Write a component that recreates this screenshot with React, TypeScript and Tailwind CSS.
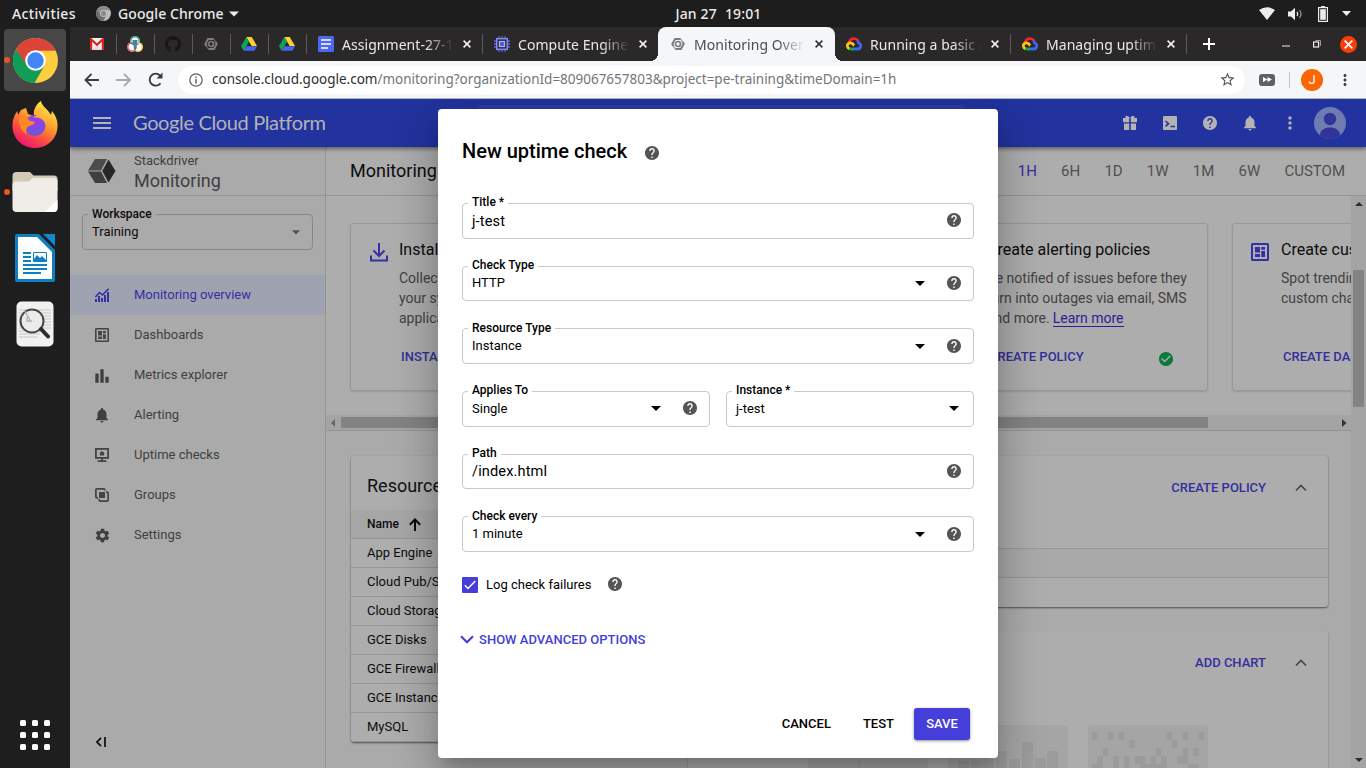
import type { ReactNode } from "react";
import {
  MdArrowDropDown,
  MdBarChart,
  MdCheckCircle,
  MdHelp,
  MdMenu,
  MdMoreVert,
  MdNotifications,
  MdSettings,
  MdStarBorder,
} from "react-icons/md";

/* ---------- logos and drawings ---------- */

function ChromeLogo({ size, gray = false }: { size: number; gray?: boolean }) {
  const c = gray
    ? ["#8a8a8a", "#6e6e6e", "#bdbdbd", "#8c8c8c"]
    : ["#db4437", "#0f9d58", "#ffcd40", "#4285f4"];
  return (
    <svg width={size} height={size} viewBox="0 0 48 48">
      <circle cx="24" cy="24" r="24" fill={c[2]} />
      <path d="M3.2 12A24 24 0 0 1 44.8 12L45.3 13.5H24L13.5 30Z" fill={c[0]} />
      <path d="M3.2 12A24 24 0 0 0 23 48L33.5 29.5L24 34.5L14.5 29Z" fill={c[1]} />
      <circle cx="24" cy="24" r="11" fill={gray ? "#c8c8c8" : "#fff"} />
      <circle cx="24" cy="24" r="8.8" fill={c[3]} />
    </svg>
  );
}

function Firefox() {
  return (
    <svg width="46" height="47" viewBox="0 0 46 47" className="mb-[3px]">
      <defs>
        <linearGradient id="ffBody" x1="0.8" y1="0" x2="0.25" y2="1">
          <stop offset="0" stopColor="#fff44f" />
          <stop offset="0.4" stopColor="#ffa02e" />
          <stop offset="0.7" stopColor="#ff4a42" />
          <stop offset="1" stopColor="#e8107c" />
        </linearGradient>
        <radialGradient id="ffGlobe" cx="0.55" cy="0.3" r="0.8">
          <stop offset="0" stopColor="#a238e8" />
          <stop offset="1" stopColor="#5b5fd8" />
        </radialGradient>
      </defs>
      <path
        d="M29 0C30 5 34 7 37 11L39 14L40 10C44 15 46 20 45.500 26C45 38 35 47 23 47C10 47 0 37 .5 24C.6 18 3 13 5.500 10L6 14L9 9L14 7L16 13L22 15C21 9 24 3 29 0Z"
        fill="url(#ffBody)"
      />
      <circle cx="23" cy="24.500" r="10.500" fill="url(#ffGlobe)" />
      <path d="M7 17C11 14 15 15 17 19.500L23 21C22 24 18 24.500 15.500 26C13.500 29 14 31 16 33C11 32 7 27 7 17Z" fill="#ff8a24" />
      <path d="M25 14C30 14 34 18 34 23C31 17.500 27 16 21 16.500Z" fill="#ffb52b" />
    </svg>
  );
}

function Folder() {
  return (
    <svg width="46" height="42" viewBox="0 0 46 42">
      <path d="M.5 5Q.5 1 4.500 1H18L21.500 4.500H42Q45.500 4.500 45.500 8V20H.5Z" fill="#d2cab8" />
      <path d="M.5 14Q.5 10.500 4 10.500H17L21 7H42Q45.500 7 45.500 10.500V37Q45.500 41 41.500 41H4.500Q.5 41 .5 37Z" fill="#f0ede8" />
      <path d="M45.500 29L33 41H41.500Q45.500 41 45.500 37Z" fill="#fff" />
    </svg>
  );
}

function Writer() {
  return (
    <svg width="40" height="48" viewBox="0 0 40 48">
      <path d="M0 2Q0 0 2 0H24L40 16V46Q40 48 38 48H2Q0 48 0 46Z" fill="#0e7fc2" />
      <path d="M28 0H40V12Z" fill="#1687cd" />
      <path d="M3 3H22L37 18V45H3Z" fill="#fff" />
      <path
        d="M8 19H16M8 23H16M8 27H16M8 31H32M8 35H32M8 39H26"
        stroke="#0e7fc2"
        strokeWidth="2"
      />
      <path d="M18.500 18.500H31.500V27.500H18.500Z" fill="none" stroke="#0e7fc2" />
      <path d="M19 27V25L22 21L25 24L27 22L31 26V27Z" fill="#0e7fc2" />
    </svg>
  );
}

function DocViewer() {
  return (
    <svg width="38" height="46" viewBox="0 0 38 46">
      <rect x=".5" y=".5" width="37" height="45" rx="5" fill="#f1f1f1" />
      <path
        d="M3 9H35M3 12H35M3 15H35M3 18H35M3 21H35M3 24H35M3 27H35M3 30H26M3 33H24M3 36H22"
        stroke="#c9c6ba"
      />
      <circle cx="16" cy="20" r="11.500" fill="#ececec" fillOpacity=".93" stroke="#484848" strokeWidth="2" />
      <path d="M9 10L15 21M11 16V20H16" stroke="#b5b5b5" strokeWidth="1.500" fill="none" />
      <path d="M25 28L32 35.500" stroke="#2d2d2d" strokeWidth="4" strokeLinecap="round" />
    </svg>
  );
}

function Gmail() {
  return (
    <svg width="16" height="12" viewBox="0 0 16 12">
      <rect x="1" width="14" height="12" fill="#f1f1f1" />
      <path d="M3 12L8 6.500L13 12Z" fill="#dcdcdc" />
      <path d="M2.100 12V1.300L8 6.800L13.900 1.300V12" fill="none" stroke="#d9251d" strokeWidth="2.200" />
    </svg>
  );
}

function RingsFavicon() {
  return (
    <svg width="16" height="16" viewBox="0 0 16 16">
      <circle cx="8" cy="5" r="4.800" fill="#fff" />
      <circle cx="5" cy="11" r="4.800" fill="#fff" />
      <circle cx="11" cy="11" r="4.800" fill="#fff" />
      <circle cx="8" cy="5" r="4.200" fill="none" stroke="#34a97b" strokeWidth="1.300" />
      <circle cx="5" cy="11" r="4.200" fill="none" stroke="#df4a57" strokeWidth="1.300" />
      <circle cx="11" cy="11" r="4.200" fill="none" stroke="#efc94c" strokeWidth="1.300" />
      <path d="M5.500 4H10.500L10 9H6ZM7 8H9V14H7Z" fill="#3f82b8" />
    </svg>
  );
}

function Octocat() {
  return (
    <svg width="16" height="16" viewBox="0 0 16 16" fill="#161616">
      <path d="M8 0C3.580 0 0 3.580 0 8c0 3.540 2.290 6.530 5.470 7.590.4.070.55-.17.55-.38 0-.19-.01-.82-.01-1.490-2.010.37-2.530-.49-2.690-.94-.09-.23-.48-.94-.82-1.130-.28-.15-.68-.52-.01-.53.63-.01 1.080.58 1.230.82.72 1.210 1.870.87 2.330.66.07-.52.28-.87.51-1.070-1.780-.2-3.640-.89-3.640-3.950 0-.87.31-1.590.82-2.150-.08-.2-.36-1.020.08-2.120 0 0 .67-.21 2.200.82.64-.18 1.320-.27 2-.27s1.360.09 2 .27c1.530-1.040 2.200-.82 2.200-.82.44 1.100.16 1.920.08 2.120.51.56.82 1.270.82 2.150 0 3.070-1.870 3.750-3.650 3.950.29.25.54.73.54 1.480 0 1.070-.01 1.930-.01 2.200 0 .21.15.46.55.38A8.010 8.010 0 0 0 16 8c0-4.420-3.580-8-8-8z" />
    </svg>
  );
}

function StackHex() {
  return (
    <svg width="14" height="14" viewBox="0 0 14 14" fill="none" stroke="#7c7c7c">
      <path d="M9.700 2H4.100L1.300 7L2.600 9.300M4.300 12H9.900L12.700 7L11.400 4.700" strokeWidth="2" />
      <path d="M9.700 2L11.400 4.700M2.600 9.300L4.300 12" strokeWidth="1.300" strokeOpacity=".7" />
      <circle cx="7" cy="7" r="2.500" strokeWidth="1.700" />
    </svg>
  );
}

function Drive() {
  return (
    <svg width="16" height="14" viewBox="0 0 16 14">
      <path d="M5.300 0H10.700L16 9H10.700Z" fill="#ffd32c" />
      <path d="M5.300 0L8 4.600L2.700 13.800L0 9.200Z" fill="#0fa259" />
      <path d="M5.400 9.200H16L13.300 13.800H2.700Z" fill="#4466f0" />
    </svg>
  );
}

function Docs() {
  return (
    <svg width="16" height="16" viewBox="0 0 16 16">
      <rect width="16" height="16" rx="1.500" fill="#4c67f2" />
      <path d="M3 4H13M3 8H13M3 12H10" stroke="#fff" strokeWidth="1.700" />
    </svg>
  );
}

function Cpu() {
  return (
    <svg width="16" height="16" viewBox="0 0 16 16" fill="none">
      <path d="M5 0V16M8 0V16M11 0V16M0 5H16M0 8H16M0 11H16" stroke="#5c63ea" strokeWidth="1.300" />
      <rect x="2.700" y="2.700" width="10.600" height="10.600" fill="#2b2829" stroke="#7f8af5" strokeWidth="1.500" />
      <rect x="5.500" y="5.500" width="5" height="5" fill="#4a50dc" stroke="#a6aefa" strokeWidth="1.300" />
    </svg>
  );
}

function GcpLogo() {
  return (
    <svg width="16" height="14" viewBox="0 0 16 14" fill="none" strokeWidth="2.800">
      <path d="M3 5.400C3.800 2.800 5.800 1.600 8 1.600C9.700 1.600 10.900 2.200 12 3.600" stroke="#ea2a2e" />
      <path d="M11.500 3.500C12.300 4.500 12.600 5 12.600 6C14.200 6.400 14.800 7.500 14.600 9C14.400 10.800 13 12 11.500 12H8" stroke="#4364f0" />
      <path d="M8.200 12H5C4.200 12 3.500 11.900 3 11.500" stroke="#12a650" />
      <path d="M3.300 11.800C1.200 10.800 1 8.300 2 6.800C3 5.500 5.500 5.300 7 7.200L8.200 8.500" stroke="#fcc714" />
    </svg>
  );
}

function MonitoringLogo() {
  return (
    <svg width="28" height="24" viewBox="0 0 28 24">
      <path d="M7 0H19L13 11.500H0Z" fill="#4c4c4c" />
      <path d="M0 12.500H13L19 24H7Z" fill="#3f3f3f" />
      <path d="M20.500 .5L27.500 12L20.500 23.500L14.300 12Z" fill="#272727" />
    </svg>
  );
}

function OverviewIcon() {
  return (
    <svg width="14" height="14" viewBox="0 0 14 14" fill="none" stroke="#362fa3">
      <path d="M1 14V11M4 14V8M7 14V10M10 14V7M13 14V4" strokeWidth="2" />
      <path d="M.4 9L4.500 4.500L7.500 7L13.500 .8" strokeWidth="1.600" />
    </svg>
  );
}

function DashIcon({ size, color }: { size: number; color: string }) {
  return (
    <svg width={size} height={size} viewBox="0 0 18 18" fill={color}>
      <path fillRule="evenodd" d="M1.500 0H16.500Q18 0 18 1.500V16.500Q18 18 16.500 18H1.500Q0 18 0 16.500V1.500Q0 0 1.500 0ZM2 2V16H16V2Z" />
      <path d="M4 4H9V9.500H4ZM10.300 4H14V6.800H10.300ZM10.300 8H14V14H10.300ZM4 11H9V14H4Z" />
    </svg>
  );
}

function UptimeIcon() {
  return (
    <svg width="14" height="14" viewBox="0 0 14 14" fill="none" stroke="#444">
      <rect x=".9" y=".9" width="12.200" height="9" strokeWidth="1.800" />
      <path d="M7 10V13M2.500 13.200H11.500" strokeWidth="1.800" />
      <path d="M7 3L10 5.500H9V7.500H5V5.500H4Z" fill="#444" stroke="none" />
    </svg>
  );
}

function GroupsIcon() {
  return (
    <svg width="14" height="14" viewBox="0 0 14 14" fill="none" stroke="#444" strokeWidth="1.700">
      <path d="M3 9.800H2Q.9 9.800 .9 8.700V2Q.9 .9 2 .9H8.700Q9.800 .9 9.800 2V2.600" />
      <path d="M11 4.200H12Q13.100 4.200 13.100 5.300V12Q13.100 13.100 12 13.100H5.300Q4.200 13.100 4.200 12V11" />
      <rect x="4" y="4" width="6" height="6" fill="#444" stroke="none" />
    </svg>
  );
}

function HelpIcon({ className }: { className?: string }) {
  return <MdHelp size={14} viewBox="2 2 20 20" className={className} />;
}

function Cross({ size = 8, color = "#f2f2f2" }: { size?: number; color?: string }) {
  return (
    <svg width={size} height={size} viewBox="0 0 8 8" className="shrink-0">
      <path d="M.6 .6L7.400 7.400M7.400 .6L.6 7.400" stroke={color} strokeWidth="1.600" />
    </svg>
  );
}

function Chevron({ up = false }: { up?: boolean }) {
  return up ? (
    <svg width="12" height="8" viewBox="0 0 12 8" fill="none">
      <path d="M1 6.500L6 1.500L11 6.500" stroke="#474747" strokeWidth="1.700" />
    </svg>
  ) : (
    <svg width="14" height="9" viewBox="0 0 14 9" fill="none">
      <path d="M1 1.200L7 7.200L13 1.200" stroke="#453ed8" strokeWidth="2.100" />
    </svg>
  );
}

/* ---------- desktop ---------- */

function TopBar() {
  return (
    <div className="grid h-[27px] shrink-0 grid-cols-3 items-center bg-[#1d1d1d] font-['Noto_Sans',sans-serif] text-[14px] font-medium text-[#ececec]">
      <div className="flex items-center pl-3">
        <span className="w-[84px] tracking-[0.35px]">Activities</span>
        <ChromeLogo size={15} gray />
        <span className="ml-[7px] tracking-[0.08px]">Google Chrome</span>
        <svg width="10" height="6" viewBox="0 0 10 6" className="ml-[5px]">
          <path d="M0 .5H10L5 5.500Z" fill="#ececec" />
        </svg>
      </div>
      <div className="flex justify-center gap-2 pl-[71px] tracking-[0.15px]">
        <span>Jan 27</span>
        <span>19:01</span>
      </div>
      <div className="flex items-center justify-end pr-[15px]">
        <svg width="16" height="13" viewBox="0 0 16 13">
          <path d="M0 3Q8 -2.500 16 3L8 13Z" fill="#ececec" />
        </svg>
        <svg width="15" height="14" viewBox="0 0 15 14" className="ml-[13px]">
          <path d="M0 4.500H3L7 .8V13.200L3 9.500H0Z" fill="#ececec" />
          <path d="M9 4.800Q10.500 7 9 9.200" fill="none" stroke="#ececec" strokeWidth="1.300" />
          <path d="M11.500 3Q14.500 7 11.500 11" fill="none" stroke="#999" strokeWidth="1.200" />
        </svg>
        <svg width="10" height="16" viewBox="0 0 10 16" className="ml-[15px]">
          <path d="M3 0H7V2H3Z" fill="#ececec" />
          <rect x=".6" y="1.600" width="8.800" height="13.800" fill="none" stroke="#ececec" strokeWidth="1.200" />
          <rect x="2.200" y="3.200" width="5.600" height="10.600" fill="#ececec" />
        </svg>
        <svg width="9" height="5" viewBox="0 0 9 5" className="ml-[14px]">
          <path d="M0 0H9L4.500 5Z" fill="#ececec" />
        </svg>
      </div>
    </div>
  );
}

function DockItem({ children, running = false, active = false }: { children: ReactNode; running?: boolean; active?: boolean }) {
  return (
    <div className="relative flex h-[66px] w-full items-center justify-center">
      <div className={active ? "flex size-[62px] items-center justify-center rounded-[4px] bg-[#474747]" : "flex size-[62px] items-center justify-center"}>
        {children}
      </div>
      {running && <span className="absolute left-1 top-[30px] size-[6px] rounded-full bg-[#e95420]" />}
    </div>
  );
}

function Dock() {
  return (
    <div className="flex w-[70px] shrink-0 flex-col bg-[#1e1e1e]">
      <DockItem active running><ChromeLogo size={45} /></DockItem>
      <DockItem><Firefox /></DockItem>
      <DockItem running><Folder /></DockItem>
      <DockItem><Writer /></DockItem>
      <DockItem><DocViewer /></DockItem>
      <div className="mx-5 mb-[18px] mt-auto grid grid-cols-3 gap-[6px]">
        {Array.from({ length: 9 }, (_, i) => (
          <span key={i} className="size-[6px] rounded-[1.5px] bg-white" />
        ))}
      </div>
    </div>
  );
}

/* ---------- browser ---------- */

function Tab({ icon, title, active = false, divider = true }: { icon: ReactNode; title: string; active?: boolean; divider?: boolean }) {
  const body = (
    <>
      <span className="flex w-4 shrink-0 justify-center">{icon}</span>
      <span className="ml-2 w-[113px] overflow-hidden whitespace-nowrap tracking-[0.05px] [mask-image:linear-gradient(to_right,#000_74%,transparent_99%)]">
        {title}
      </span>
      <span className="ml-[7px] flex w-[10px] justify-center">
        <Cross color={active ? "#333" : "#f2f2f2"} />
      </span>
    </>
  );
  if (active) {
    return (
      <div className="relative z-10 -ml-px flex h-full w-[177px] items-center rounded-t-[8px] bg-[#f4f6f8] pl-3 text-[#4a4d51]">
        {body}
        <span className="absolute -left-2 bottom-0 size-2 bg-[radial-gradient(circle_at_0_0,#2b2829_8px,#f4f6f8_8px)]" />
        <span className="absolute -right-2 bottom-0 size-2 bg-[radial-gradient(circle_at_100%_0,#2b2829_8px,#f4f6f8_8px)]" />
      </div>
    );
  }
  return (
    <div className="flex h-full w-[176px] items-center pl-[11px] text-[#e8e8e8]">
      {body}
      {divider && <span className="ml-auto h-5 w-px bg-[#5a5858]" />}
    </div>
  );
}

function TabStrip() {
  const pinned = [<Gmail />, <RingsFavicon />, <Octocat />, <StackHex />, <Drive />, <Drive />];
  return (
    <div className="flex h-[34px] shrink-0 items-center bg-[#2b2829] pl-[9px] font-['Noto_Sans',sans-serif] text-[14px]">
      {pinned.map((p, i) => (
        <div key={i} className="flex w-[38px] items-center">
          <span className="flex flex-1 justify-center pr-px">{p}</span>
          <span className="h-5 w-px bg-[#5a5858]" />
        </div>
      ))}
      <Tab icon={<Docs />} title="Assignment-27-1" />
      <Tab icon={<Cpu />} title="Compute Engine" divider={false} />
      <Tab icon={<StackHex />} title="Monitoring Over" active />
      <Tab icon={<GcpLogo />} title="Running a basic A" />
      <Tab icon={<GcpLogo />} title="Managing uptim" />
      <svg width="12" height="12" viewBox="0 0 12 12" className="ml-4">
        <path d="M6 0V12M0 6H12" stroke="#fff" strokeWidth="2" />
      </svg>
      <svg width="8" height="2" viewBox="0 0 8 2" className="ml-[67px] mt-1">
        <path d="M0 1H8" stroke="#eee" strokeWidth="1" />
      </svg>
      <svg width="8" height="8" viewBox="0 0 8 8" className="ml-[23px]" fill="none">
        <rect x=".6" y="2" width="5" height="5" stroke="#eee" strokeWidth="1.200" />
        <path d="M2.500 .5H7.500V6" stroke="#999" />
      </svg>
      <span className="ml-[19px] flex size-[17px] items-center justify-center rounded-full bg-[#fb3c08]">
        <Cross size={9} color="#fff" />
      </span>
    </div>
  );
}

function Toolbar() {
  return (
    <div className="flex h-[38px] shrink-0 items-center border-b border-[#a9b4bd] bg-[#f4f6f8] pl-[14px] font-['Noto_Sans',sans-serif]">
      <svg width="16" height="14" viewBox="0 0 16 14" fill="none">
        <path d="M15 7H2M7.500 .9L1.500 7L7.500 13.100" stroke="#3b3d40" strokeWidth="1.900" />
      </svg>
      <svg width="16" height="14" viewBox="0 0 16 14" fill="none" className="ml-4">
        <path d="M0 7H13.500M8 .9L14 7L8 13.100" stroke="#a6a8ab" strokeWidth="1.900" />
      </svg>
      <svg width="15" height="15" viewBox="0 0 15 15" fill="none" className="ml-4">
        <path d="M12.500 11.200A6 6 0 1 1 12 3.500" stroke="#3b3d40" strokeWidth="1.900" />
        <path d="M14.500 .5V6.500H8.500Z" fill="#3b3d40" />
      </svg>
      <div className="ml-[15px] flex h-7 w-[1067px] items-center rounded-full bg-white pl-[11px]">
        <svg width="14" height="14" viewBox="0 0 14 14" fill="none" stroke="#5f6368">
          <circle cx="7" cy="7" r="6.200" strokeWidth="1.300" />
          <path d="M7 6V10.500M7 3.500V5" strokeWidth="1.500" />
        </svg>
        <span className="ml-[9px] whitespace-nowrap text-[13.5px] tracking-[-0.01px] text-[#2c2e31]">
          console.cloud.google.com
          <span className="text-[#72767a]">/monitoring?organizationId=809067657803&amp;project=pe-training&amp;timeDomain=1h</span>
        </span>
        <MdStarBorder size={17} className="ml-auto mr-[9px] text-[#55585c]" />
      </div>
      <span className="ml-[14px] flex h-3 w-4 items-center justify-center rounded-[3px] bg-[#5d6163]">
        <svg width="9" height="5" viewBox="0 0 9 5" fill="#fff">
          <path d="M0 0L4.500 2.500L0 5ZM4.500 0L9 2.500L4.500 5Z" />
        </svg>
      </span>
      <span className="ml-[14px] h-4 w-px bg-[#c5c8cb]" />
      <span className="ml-[11px] flex size-[22px] items-center justify-center rounded-full bg-[#fb6502] font-['Roboto',sans-serif] text-[13px] text-white">J</span>
      <MdMoreVert size={18} className="ml-[13px] text-[#3b3d40]" />
    </div>
  );
}

/* ---------- cloud console ---------- */

function ConsoleHeader() {
  return (
    <div className="relative z-10 flex h-12 shrink-0 items-center bg-[#22339f] pl-5 text-[#b3b3b3] shadow-[0_2px_4px_rgba(0,0,0,0.45)]">
      <MdMenu size={24} />
      <span className="ml-[19px] w-[342px] whitespace-nowrap pb-[2px] font-['Lato',sans-serif] text-[20px] tracking-[-0.36px]">
        Google Cloud Platform
      </span>
      <span className="ml-[2px] h-9 w-[488px] rounded-[2px] bg-[#2c3ca3]" />
      <div className="ml-auto flex items-center">
        <svg width="14" height="14" viewBox="0 0 14 14" fill="currentColor">
          <path d="M0 2H6.200V6.200H0ZM7.800 2H14V6.200H7.800ZM1 7.600H6.200V14H1ZM7.800 7.600H13V14H7.800ZM3 0Q5.500 -.5 7 2Q8.500 -.5 11 0Q12.500 1 11 2H3Q1.500 1 3 0Z" />
        </svg>
        <svg width="14" height="14" viewBox="0 0 14 14" className="ml-[26px]">
          <rect width="14" height="14" rx="1" fill="currentColor" />
          <path d="M2.500 5L5.500 7.700L2.500 10.400M7.500 10.500H12" fill="none" stroke="#22339f" strokeWidth="1.600" />
        </svg>
        <HelpIcon className="ml-[26px]" />
        <MdNotifications size={18} className="ml-6" />
        <MdMoreVert size={20} className="ml-[21px]" />
        <svg width="32" height="32" viewBox="0 0 32 32" className="ml-[14px] mr-5">
          <defs>
            <clipPath id="avatar"><circle cx="16" cy="16" r="16" /></clipPath>
          </defs>
          <circle cx="16" cy="16" r="16" fill="#6e7cb0" />
          <circle cx="16" cy="12" r="6.200" fill="#33349a" />
          <path d="M6 32V28C6 18 26 18 26 28V32Z" fill="#33349a" clipPath="url(#avatar)" />
        </svg>
      </div>
    </div>
  );
}

function Sidebar() {
  const items: [string, ReactNode][] = [
    ["Monitoring overview", <OverviewIcon />],
    ["Dashboards", <DashIcon size={14} color="#444" />],
    ["Metrics explorer", <MdBarChart size={20} className="mt-[2px]" />],
    ["Alerting", <MdNotifications size={18} />],
    ["Uptime checks", <UptimeIcon />],
    ["Groups", <GroupsIcon />],
    ["Settings", <MdSettings size={17} />],
  ];
  return (
    <div className="flex w-[256px] shrink-0 flex-col border-r border-[#959595] bg-[#aaaaaa] text-[#3f3f3f]">
      <div className="flex h-[49px] shrink-0 items-center border-b border-[#959595] pl-[18px]">
        <MonitoringLogo />
        <div className="ml-[18px]">
          <div className="pt-px text-[13px] leading-[18px]">Stackdriver</div>
          <div className="text-[18px] leading-[22px]">Monitoring</div>
        </div>
      </div>
      <div className="relative ml-3 mt-[18px] flex h-9 w-[231px] shrink-0 items-center rounded-[4px] border border-[#888] pl-[9px] text-[13px] text-[#0c0c0c]">
        <span className="absolute -top-[10px] left-[5px] bg-[#aaaaaa] px-1 text-[12px] font-medium leading-[18px]">Workspace</span>
        Training
        <MdArrowDropDown size={20} className="ml-auto mr-[6px] text-[#555]" />
      </div>
      <div className="mt-[25px]">
        {items.map(([label, icon], i) => (
          <div
            key={label}
            className={
              i === 0
                ? "flex h-10 items-center bg-[#9fa2b0] pl-[21px] text-[13px] text-[#362fa3]"
                : "flex h-10 items-center pl-[21px] text-[13px]"
            }
          >
            <span className="flex w-[22px] justify-center">{icon}</span>
            <span className="ml-[21px]">{label}</span>
          </div>
        ))}
      </div>
      <svg width="10" height="10" viewBox="0 0 10 10" fill="none" className="mb-[21px] ml-[26px] mt-auto">
        <path d="M5 .8L1 5L5 9.200M9 0V10" stroke="#0c0c0c" strokeWidth="1.700" />
      </svg>
    </div>
  );
}

function PromoCard({ icon, title, lines, link, action, done = false }: { icon: ReactNode; title: string; lines: string[]; link?: string; action: string; done?: boolean }) {
  return (
    <div className="flex h-[168px] w-[270px] shrink-0 rounded-[3px] border border-[#989898] pl-[18px] pt-4 shadow-[0_1px_2px_rgba(0,0,0,0.12)]">
      <span className="mt-[3px] w-[30px] shrink-0">{icon}</span>
      <div className="flex-1 whitespace-nowrap">
        <div className="text-[16px] leading-5 text-[#0c0c0c]">{title}</div>
        <div className="mt-2 h-[60px] text-[14px] leading-5 text-[#424242]">
          {lines.map((l, i) => (
            <div key={l}>
              {l}
              {link && i === lines.length - 1 && (
                <span className="ml-[3px] inline-block h-[19px] border-b border-[#2b1f96] leading-5 text-[#2b1f96]">{link}</span>
              )}
            </div>
          ))}
        </div>
        <div className="mt-[19px] flex h-5 items-center pl-[2px] text-[13px] font-medium leading-5 text-[#332d9c]">
          {action}
          {done && <MdCheckCircle size={14} viewBox="2 2 20 20" className="ml-auto mr-[34px] mt-1 text-[#077a3c]" />}
        </div>
      </div>
    </div>
  );
}

function ResourceTable() {
  const rows = ["App Engine", "Cloud Pub/Sub", "Cloud Storage", "GCE Disks", "GCE Firewalls", "GCE Instances", "MySQL"];
  return (
    <div className="h-[286px] w-[314px] overflow-hidden rounded-[3px] bg-[#adadad] shadow-[0_1px_2px_rgba(0,0,0,0.55)]">
      <div className="flex h-[54px] items-center pl-4 pt-1 text-[18px] text-[#111]">Resources</div>
      <div className="flex h-[29px] items-center border-b border-[#969696] bg-[#a6a6a6] pl-4 text-[12px] font-medium text-[#0c0c0c]">
        Name
        <svg width="12" height="13" viewBox="0 0 12 13" fill="none" className="ml-[10px]">
          <path d="M6 13V1.500M.8 6.700L6 1.500L11.200 6.700" stroke="#0c0c0c" strokeWidth="2" />
        </svg>
      </div>
      {rows.map((r) => (
        <div key={r} className="flex h-[29px] items-center border-b border-[#969696] pl-4 text-[13px] text-[#0c0c0c]">
          {r}
        </div>
      ))}
    </div>
  );
}

const dots: [number, number][] = [
  [0, 0], [3, 0], [5, 0], [14, 0], [17, 0], [20, 0],
  [7, 1], [15, 1],
  [2, 2], [12, 2], [17, 2], [19, 2],
  [1, 3], [4, 3], [6, 3], [8, 3], [9, 3], [11, 3], [13, 3], [16, 3], [17, 3],
  [0, 4], [1, 4], [4, 4], [6, 4], [9, 4], [10, 4], [11, 4], [12, 4], [13, 4], [18, 4], [19, 4],
];

function ChartTiles() {
  const bars: [number, number][] = [[10, 36], [23, 36], [35, 30], [48, 26], [61, 34], [74, 17], [87, 33], [99, 26]];
  return (
    <div className="flex gap-5 pl-[120px] pt-[30px]">
      <svg width="120" height="44" viewBox="0 0 120 44">
        <rect width="120" height="60" rx="4" fill="#a5a5a5" />
        <path d="M40 60Q48 60 51 35Q54 60 62 60" fill="none" stroke="#999" />
      </svg>
      <svg width="120" height="44" viewBox="0 0 120 44">
        <rect width="120" height="60" rx="4" fill="#a5a5a5" />
        {bars.map(([x, y]) => (
          <rect key={x} x={x} y={y} width="11" height="30" fill="#9b9b9b" />
        ))}
      </svg>
      <svg width="120" height="44" viewBox="0 0 120 44">
        <rect width="120" height="60" rx="4" fill="#a5a5a5" />
        {dots.map(([c, r]) => (
          <rect key={`${c}-${r}`} x={4 + c * 5.33} y={7 + r * 8} width="5.400" height="8" fill="#9b9b9b" />
        ))}
      </svg>
    </div>
  );
}

function PanelTop({ action }: { action: string }) {
  return (
    <div className="flex h-[64px] items-center justify-end pr-[21px] text-[13px] font-medium text-[#332d9c]">
      {action}
      <span className="ml-[29px]"><Chevron up /></span>
    </div>
  );
}

function MainArea() {
  const ranges = ["1H", "6H", "1D", "1W", "1M", "6W", "CUSTOM"];
  return (
    <div className="flex min-w-0 flex-1 flex-col bg-[#adadad]">
      <div className="flex h-[49px] shrink-0 items-center border-b border-[#959595] pl-6 pr-[21px]">
        <span className="pb-[2px] text-[18px] text-[#0c0c0c]">Monitoring</span>
        <div className="ml-auto flex gap-[24.2px] text-[15px] text-[#505050]">
          {ranges.map((r, i) => (
            <span key={r} className={i === 0 ? "text-[#362fa3]" : ""}>{r}</span>
          ))}
        </div>
      </div>
      <div className="flex min-h-0 flex-1">
        <div className="flex min-w-0 flex-1 flex-col">
          <div className="flex h-[219px] shrink-0 gap-6 overflow-hidden pl-6 pt-[27px]">
            <PromoCard
              icon={
                <svg width="20" height="19" viewBox="0 0 20 19" fill="none">
                  <path d="M10 0V13M4.500 7.500L10 13L15.500 7.500M2 12.500V17.500H18V12.500" stroke="#362fa3" strokeWidth="2" />
                </svg>
              }
              title="Install"
              lines={["Collect", "your sys", "applica"]}
              action="INSTALL"
            />
            <div className="w-[270px] shrink-0" />
            <PromoCard
              icon={null}
              title="Create alerting policies"
              lines={["Be notified of issues before they", "turn into outages via email, SMS", "and more."]}
              link="Learn more"
              action="CREATE POLICY"
              done
            />
            <PromoCard
              icon={<DashIcon size={18} color="#362fa3" />}
              title="Create custom"
              lines={["Spot trending", "custom charts"]}
              action="CREATE DASH"
            />
          </div>
          <div className="flex h-[15px] shrink-0 items-center bg-[#a4a4a4]">
            <svg width="15" height="8" viewBox="0 0 15 8"><path d="M9 0V8L5 4Z" fill="#666" /></svg>
            <span className="h-[11px] w-[867px] bg-[#838383]" />
            <svg width="5" height="8" viewBox="0 0 5 8" className="ml-auto mr-1"><path d="M0 0V8L4.500 4Z" fill="#333" /></svg>
          </div>
          <div className="flex min-h-0 flex-1 gap-6 overflow-hidden border-t border-[#959595] bg-[#aaaaaa] pl-[25px] pt-[25px]">
            <div className="flex w-[313px] shrink-0 flex-col gap-6"><ResourceTable /></div>
            <div className="flex w-[640px] shrink-0 flex-col gap-6">
              <div className="h-[151px] shrink-0 rounded-[3px] bg-[#adadad] shadow-[0_1px_2px_rgba(0,0,0,0.55)]">
                <PanelTop action="CREATE POLICY" />
                <div className="mt-7 h-[30px] border-y border-[#969696] bg-[#a9a9a9]" />
              </div>
              <div className="h-[200px] shrink-0 rounded-[3px] bg-[#adadad] shadow-[0_1px_2px_rgba(0,0,0,0.35)]">
                <PanelTop action="ADD CHART" />
                <ChartTiles />
              </div>
            </div>
          </div>
        </div>
        <div className="flex w-[15px] flex-col items-center bg-[#a4a4a4]">
          <svg width="8" height="4" viewBox="0 0 8 4" className="mt-[6px]"><path d="M0 4H8L4 0Z" fill="#2c2c2c" /></svg>
          <span className="mt-16 h-[137px] w-[11px] bg-[#838383]" />
          <svg width="8" height="4" viewBox="0 0 8 4" className="mb-[6px] mt-auto"><path d="M0 0H8L4 4Z" fill="#2c2c2c" /></svg>
        </div>
      </div>
    </div>
  );
}

/* ---------- dialog ---------- */

function Caret() {
  return (
    <svg width="10" height="5" viewBox="0 0 10 5"><path d="M0 0H10L5 5Z" fill="#000" /></svg>
  );
}

function Field({ label, value, select = false, help = true }: { label: string; value: string; select?: boolean; help?: boolean }) {
  return (
    <div className="relative flex h-[35.66px] flex-1 items-center rounded-[4px] border border-[#c9c9c9] pl-[9px] pr-3 text-black">
      <span className="absolute -top-[10.6px] left-[5px] bg-white px-1 text-[12px] font-medium leading-[18px]">{label}</span>
      <span className={select ? "pb-px text-[13px]" : "text-[14.6px] leading-5 tracking-[0.12px]"}>{value}</span>
      <span className="ml-auto flex items-center">
        {select && <span className={help ? "" : "mr-[2px]"}><Caret /></span>}
        {help && <HelpIcon className="mb-px ml-[22px] text-[#555]" />}
      </span>
    </div>
  );
}

function UptimeDialog() {
  return (
    <div className="absolute left-[368px] top-[10px] z-20 flex h-[649px] w-[560px] flex-col rounded-[4px] bg-white px-6 pt-[30px] shadow-[0_11px_15px_-7px_rgba(0,0,0,0.2),0_24px_38px_3px_rgba(0,0,0,0.14),0_9px_46px_8px_rgba(0,0,0,0.12)]">
      <div className="flex h-6 items-center text-[20px] font-medium text-black">
        <span>New uptime check</span>
        <HelpIcon className="ml-[17.5px] mt-1 text-[#555]" />
      </div>
      <div className="mt-[40px] flex flex-col gap-[27px]">
        <div className="flex"><Field label="Title *" value="j-test" /></div>
        <div className="flex"><Field label="Check Type" value="HTTP" select /></div>
        <div className="flex"><Field label="Resource Type" value="Instance" select /></div>
        <div className="flex gap-4">
          <Field label="Applies To" value="Single" select />
          <Field label="Instance *" value="j-test" select help={false} />
        </div>
        <div className="flex"><Field label="Path" value="/index.html" /></div>
        <div className="flex"><Field label="Check every" value="1 minute" select /></div>
      </div>
      <div className="mt-[23px] flex h-5 items-center text-[13px] text-black">
        <span className="flex size-4 items-center justify-center rounded-[1px] bg-[#453ed8]">
          <svg width="12" height="10" viewBox="0 0 12 10" fill="none"><path d="M.8 5.200L4 8.500L11.300 1" stroke="#fff" strokeWidth="1.500" /></svg>
        </span>
        <span className="ml-2">Log check failures</span>
        <HelpIcon className="mb-[2px] ml-[16.5px] text-[#555]" />
      </div>
      <div className="-ml-[2px] mt-[35px] flex h-5 items-center text-[13px] font-medium text-[#453ed8]">
        <Chevron />
        <span className="ml-[5px] tracking-[0.02px]">SHOW ADVANCED OPTIONS</span>
      </div>
      <div className="mb-[18px] mr-1 mt-auto flex h-8 items-center justify-end text-[13px] font-medium text-black">
        <span>CANCEL</span>
        <span className="ml-8">TEST</span>
        <span className="ml-5 flex h-8 w-14 items-center justify-center rounded-[3px] bg-[#453ed8] text-white shadow-[0_1px_3px_rgba(0,0,0,0.45)]">SAVE</span>
      </div>
    </div>
  );
}

export default function App() {
  return (
    <div className="flex h-[768px] w-[1366px] flex-col overflow-hidden bg-[#1e1e1e] font-['Roboto',sans-serif]">
      <TopBar />
      <div className="flex min-h-0 flex-1">
        <Dock />
        <div className="flex min-w-0 flex-1 flex-col">
          <TabStrip />
          <Toolbar />
          <div className="relative flex min-h-0 flex-1 flex-col overflow-hidden">
            <ConsoleHeader />
            <div className="flex min-h-0 flex-1">
              <Sidebar />
              <MainArea />
            </div>
            <UptimeDialog />
          </div>
        </div>
      </div>
    </div>
  );
}
